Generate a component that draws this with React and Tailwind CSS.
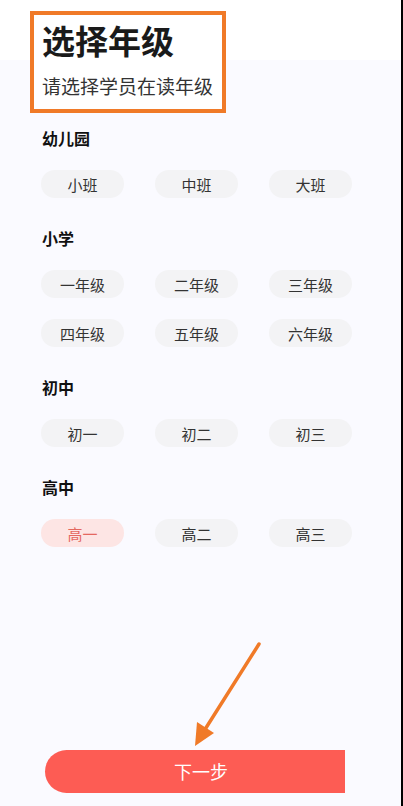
import React, { useState } from "react";

const groups = [
  { title: "幼儿园", rows: [["小班", "中班", "大班"]] },
  {
    title: "小学",
    rows: [
      ["一年级", "二年级", "三年级"],
      ["四年级", "五年级", "六年级"],
    ],
  },
  { title: "初中", rows: [["初一", "初二", "初三"]] },
  { title: "高中", rows: [["高一", "高二", "高三"]] },
];

const GradePill = ({ label, active, onClick }) => (
  <button
    onClick={onClick}
    className={`w-[83px] h-[28px] rounded-full text-[15px] leading-none flex items-center justify-center ${
      active ? "bg-[#fde5e4] text-[#e4685f]" : "bg-[#f3f3f5] text-[#333333]"
    }`}
  >
    {label}
  </button>
);

const App = () => {
  const [grade, setGrade] = useState("高一");

  return (
    <div className="relative w-full min-h-[806px] flex flex-col border-r-2 border-black bg-[linear-gradient(to_bottom,#ffffff_60px,#fafaff_60px)] font-['Noto_Sans_CJK_SC','Noto_Sans',sans-serif]">
      {/* header, boxed in orange */}
      <div className="ml-[30px] mt-[11px] w-[196px] h-[102px] border-4 border-[#f07a28] bg-white px-[8px] pt-[6px]">
        <h1 className="text-[33px] leading-[38px] font-bold text-[#1a1a1a]">
          选择年级
        </h1>
        <p className="mt-[14px] text-[19px] leading-[25px] text-[#333333] whitespace-nowrap">
          请选择学员在读年级
        </p>
      </div>

      <div className="mt-[15px] flex flex-col gap-[30px] pl-[41px]">
        {groups.map((g) => (
          <div key={g.title} className="flex flex-col gap-[22px]">
            <div className="pl-[1px] text-[16px] leading-[20px] font-semibold text-[#111111]">
              {g.title}
            </div>
            <div className="flex flex-col gap-[21px]">
              {g.rows.map((row, i) => (
                <div key={i} className="flex gap-[31px]">
                  {row.map((label) => (
                    <GradePill
                      key={label}
                      label={label}
                      active={grade === label}
                      onClick={() => setGrade(label)}
                    />
                  ))}
                </div>
              ))}
            </div>
          </div>
        ))}
      </div>

      <div className="mt-auto mb-[13px] ml-[45px] w-[300px] h-[43px] rounded-l-full rounded-r-[4px] bg-[#fd5c54] flex items-center justify-center pl-[12px] text-[18px] text-white">
        下一步
      </div>

      {/* annotation arrow */}
      <svg
        className="absolute left-0 top-0 pointer-events-none"
        width="403"
        height="806"
        viewBox="0 0 403 806"
      >
        <line
          x1="259"
          y1="644"
          x2="204"
          y2="731"
          stroke="#f07a28"
          strokeWidth="3.5"
          strokeLinecap="round"
        />
        <polygon points="195,746 214,733 197,722" fill="#f07a28" />
      </svg>
    </div>
  );
};

export default App;
